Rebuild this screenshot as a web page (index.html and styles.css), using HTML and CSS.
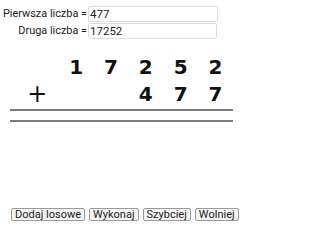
FILE: index.html
```html
<!DOCTYPE html>
<html>
<head>
<meta charset="utf-8">
<link rel="stylesheet" href="styles.css">
</head>
<body>
<div class="app">
  <div class="form">
    <label class="lbl">Pierwsza liczba =</label>
    <div class="field">477</div>
    <label class="lbl">Druga liczba =</label>
    <div class="field f2">17252</div>
  </div>
  <div class="sum">
    <div class="row">
      <span></span><span>1</span><span>7</span><span>2</span><span>5</span><span>2</span>
    </div>
    <div class="row r2">
      <span class="plus">+</span><span></span><span></span><span>4</span><span>7</span><span>7</span>
    </div>
  </div>
  <div class="line l1"></div>
  <div class="line l2"></div>
  <div class="buttons">
    <button class="btn">Dodaj losowe</button>
    <button class="btn">Wykonaj</button>
    <button class="btn">Szybciej</button>
    <button class="btn">Wolniej</button>
  </div>
</div>
</body>
</html>
```
FILE: styles.css
```css
html, body {
  margin: 0;
  padding: 0;
  background: #fff;
}
.app {
  width: 256px;
  height: 226px;
  font-family: Roboto, "Liberation Sans", sans-serif;
  color: #222;
}
.form {
  display: grid;
  grid-template-columns: 88px 130px;
  grid-template-rows: 16px 16px;
  row-gap: 1px;
  padding-top: 6px;
}
.lbl {
  font-size: 10.9px;
  text-align: right;
  line-height: 16px;
  padding-right: 1px;
  white-space: nowrap;
}
.field {
  box-sizing: border-box;
  border: 1px solid #dcdcdc;
  border-radius: 2px;
  font-size: 11.5px;
  line-height: 14px;
  padding-left: 1px;
  color: #222;
}
.field.f2 {
  width: 129px;
}
.sum {
  margin-top: 15px;
  padding-left: 24px;
  font-family: "DejaVu Sans", sans-serif;
  font-weight: bold;
  font-size: 20px;
  color: #111;
}
.row {
  display: grid;
  grid-template-columns: repeat(6, 34.8px);
  height: 27px;
  line-height: 27px;
  text-align: center;
}
.plus {
  font-weight: normal;
  font-size: 24px;
  padding-right: 8px;
}
.line {
  margin-left: 10px;
  width: 223px;
  height: 2px;
  background: #7a7a7a;
}
.l1 {
  margin-top: 1px;
}
.l2 {
  margin-top: 9px;
}
.buttons {
  display: flex;
  gap: 4px;
  margin-top: 86px;
  padding-left: 11px;
}
.btn {
  box-sizing: border-box;
  height: 13px;
  padding: 0 3px;
  margin: 0;
  border: 1px solid #9a9a9a;
  border-radius: 2px;
  background: #f4f4f4;
  font-family: Roboto, "Liberation Sans", sans-serif;
  font-size: 11px;
  line-height: 11px;
  color: #222;
}
```
